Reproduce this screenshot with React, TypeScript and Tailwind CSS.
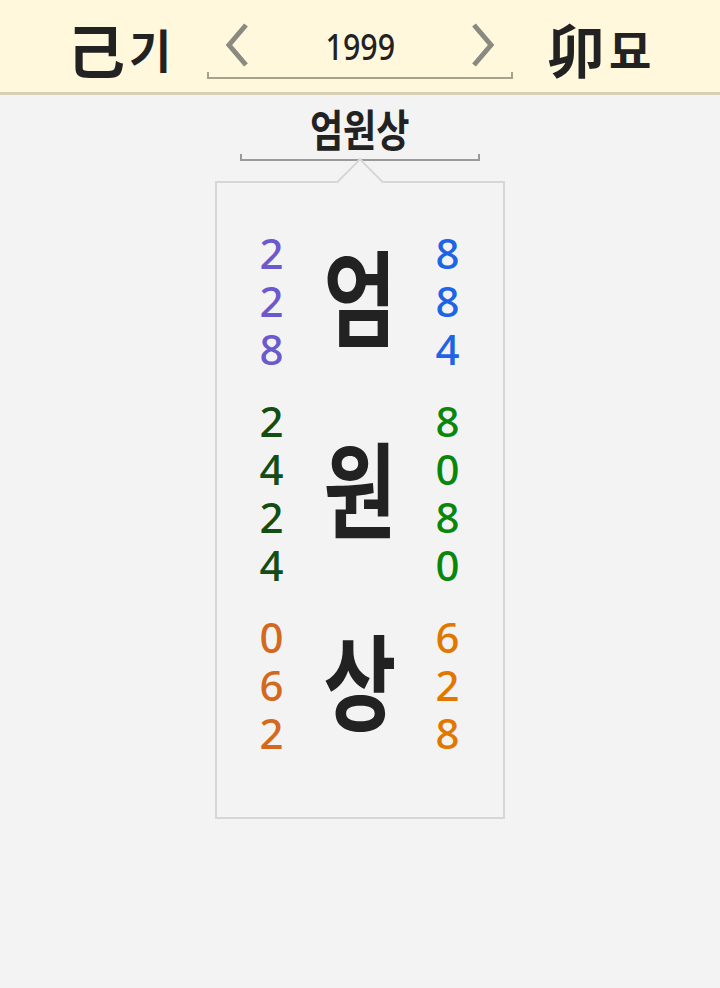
import React from 'react';

const KR = "font-['Noto_Sans_CJK_KR','Noto_Sans',sans-serif]";

type Group = { char: string; left: string[]; right: string[]; leftColor: string; rightColor: string };

const groups: Group[] = [
    { char: '엄', left: ['2', '2', '8'], right: ['8', '8', '4'], leftColor: 'text-[#6a5acd]', rightColor: 'text-[#1e64e6]' },
    { char: '원', left: ['2', '4', '2', '4'], right: ['8', '0', '8', '0'], leftColor: 'text-[#114d14]', rightColor: 'text-[#0a870a]' },
    { char: '상', left: ['0', '6', '2'], right: ['6', '2', '8'], leftColor: 'text-[#d2691e]', rightColor: 'text-[#e07800]' },
];

const Chevron = ({ dir }: { dir: 'left' | 'right' }) => (
    <svg width="26" height="44" viewBox="0 0 26 44" fill="none">
        <polyline
            points={dir === 'left' ? '22,2 5,22 22,42' : '4,2 21,22 4,42'}
            stroke="#8b8a80"
            strokeWidth="5"
            strokeLinecap="butt"
            strokeLinejoin="miter"
        />
    </svg>
);

// one text block per column, digits on separate lines
const DigitColumn = ({ digits, color }: { digits: string[]; color: string }) => (
    <div className={`w-[40px] text-center whitespace-pre-line leading-[48px] text-[42px] font-medium font-['Noto_Sans',sans-serif] ${color}`}>
        {digits.join('\n')}
    </div>
);

const App = () => {
    return (
        <div className={`min-h-[988px] bg-[#f3f3f3] ${KR}`}>
            {/* header */}
            <div className="h-[95px] bg-[#fff8dc] border-b-[3px] border-[#d6cfb2] flex items-start justify-center pt-[18px] gap-[34px] text-[#222]">
                <div className="w-[106px] flex items-center h-[60px]">
                    <span className="text-[58px] font-bold leading-none">己</span>
                    <span className="text-[46px] font-bold leading-none ml-[4px]">기</span>
                </div>
                <div className="w-[306px] flex flex-col">
                    <div className="flex items-center justify-between h-[54px] px-[17px]">
                        <Chevron dir="left" />
                        <span className="text-[37px] font-medium font-['Noto_Sans',sans-serif] leading-none scale-x-[0.82] text-[#222]">1999</span>
                        <Chevron dir="right" />
                    </div>
                    <div className="h-[7px] border-x-2 border-b-2 border-[#a6a38d]"></div>
                </div>
                <div className="w-[106px] flex items-center h-[60px]">
                    <span className="text-[58px] font-bold leading-none">卯</span>
                    <span className="text-[46px] font-bold leading-none ml-[4px]">묘</span>
                </div>
            </div>

            {/* title */}
            <div className="flex flex-col items-center pt-[7px]">
                <div className="text-[44px] font-bold leading-[52px] text-[#222] scale-x-[0.82]">엄원상</div>
                <div className="w-[240px] h-[7px] border-x-2 border-b-2 border-[#9a9a9a]"></div>

                {/* card */}
                <div className="relative mt-[20px] -ml-[1px] w-[290px] border-2 border-[#d6d6d6] pt-[46px] pb-[60px] flex flex-col gap-[24px]">
                    <div className="absolute left-1/2 -top-[18px] -ml-[17px] w-[34px] h-[34px] rotate-45 bg-[#f3f3f3] border-l-2 border-t-2 border-[#d6d6d6]"></div>
                    {groups.map((g) => (
                        <div key={g.char} className="relative flex justify-center items-center">
                            <DigitColumn digits={g.left} color={g.leftColor} />
                            <div className="w-[136px] flex justify-center">
                                <span className="text-[104px] font-bold leading-none text-[#222] scale-x-[0.76] -translate-y-[7px]">{g.char}</span>
                            </div>
                            <DigitColumn digits={g.right} color={g.rightColor} />
                        </div>
                    ))}
                </div>
            </div>
        </div>
    );
};

export default App;
